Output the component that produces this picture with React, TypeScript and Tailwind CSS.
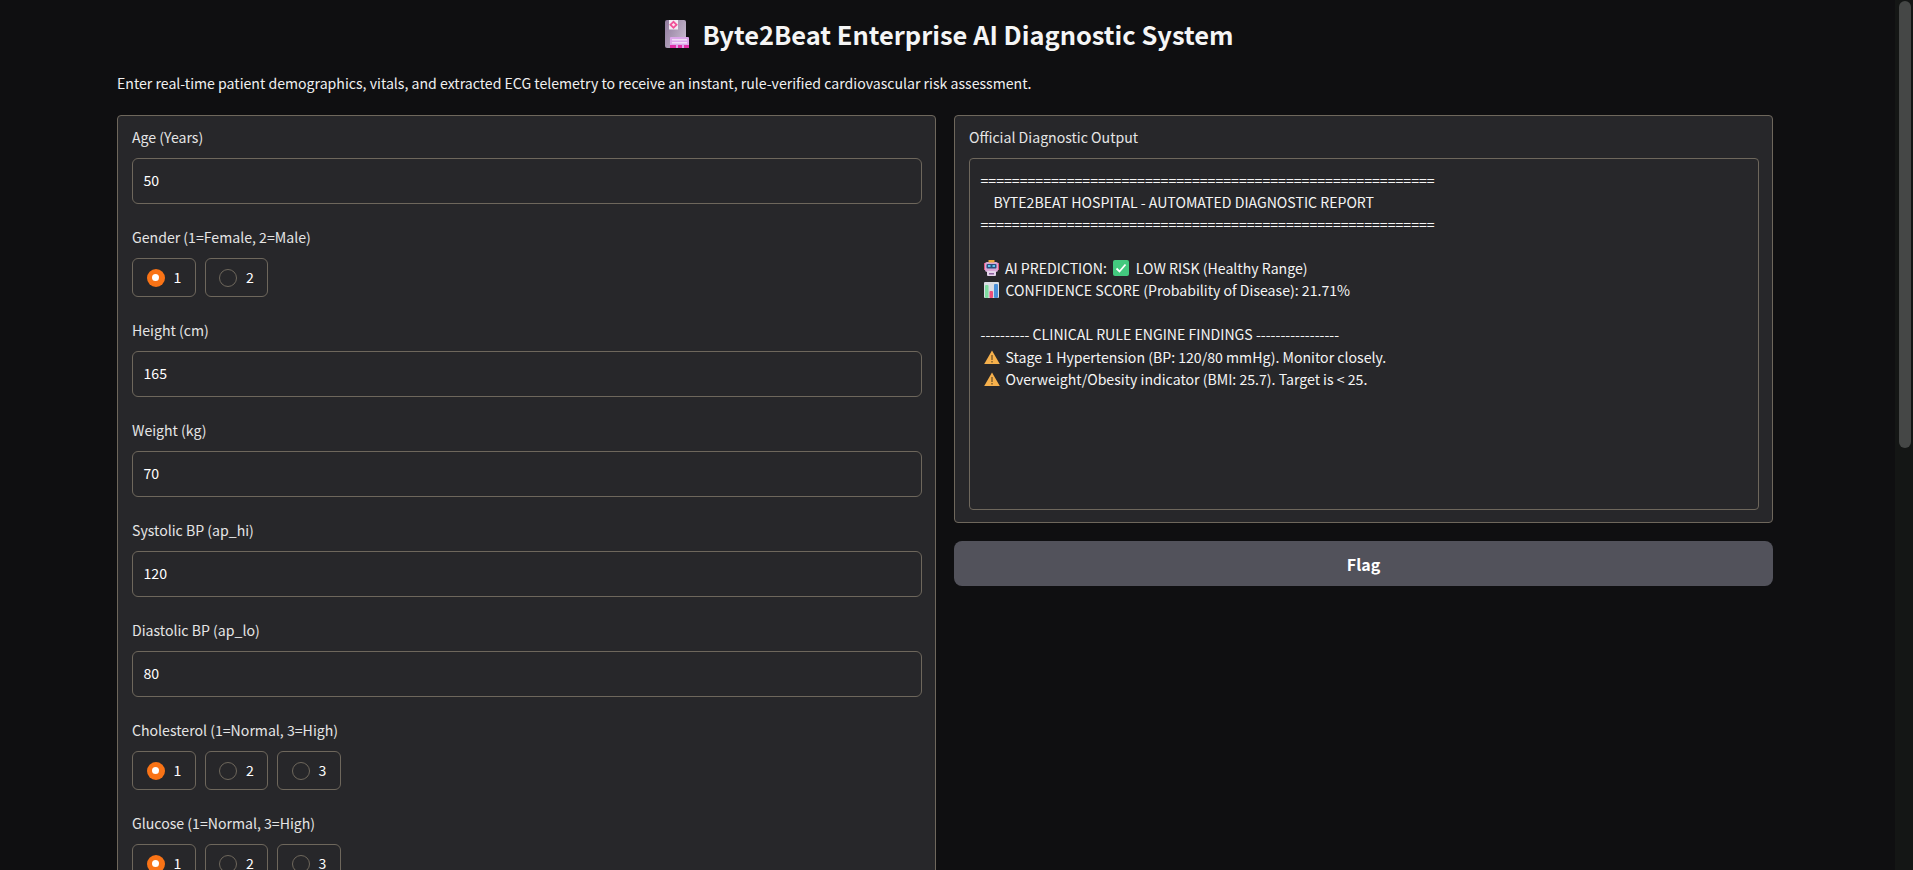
const font = { fontFamily: '"Noto Sans CJK SC", "Noto Sans", sans-serif' }

function Field({ label, value }: { label: string; value: string }) {
  return (
    <div className="flex flex-col">
      <label className="text-[14.12px] leading-[18px] text-[#e5e5e5]">{label}</label>
      <div className="mt-[12px] h-[46px] flex items-center pl-[10.5px] rounded-[6px] border border-[#6e675c] text-[14.12px] text-white">
        {value}
      </div>
    </div>
  )
}

function Radios({ label, options }: { label: string; options: string[] }) {
  return (
    <div className="flex flex-col">
      <label className="text-[14.12px] leading-[18px] text-[#e5e5e5]">{label}</label>
      <div className="mt-[12px] flex gap-[9px]">
        {options.map((opt, i) => (
          <div key={opt} className="h-[39px] w-[63.5px] flex items-center gap-[9px] pl-[13.5px] rounded-[6px] border border-[#6e675c] text-[14.12px] text-white">
            {i === 0 ? (
              <span className="w-[18px] h-[18px] rounded-full bg-[#f97316] flex items-center justify-center">
                <span className="w-[7px] h-[7px] rounded-full bg-white" />
              </span>
            ) : (
              <span className="w-[18px] h-[18px] rounded-full border border-[#6e675c]" />
            )}
            {opt}
          </div>
        ))}
      </div>
    </div>
  )
}

function HospitalIcon() {
  return (
    <svg width="25" height="28" viewBox="0 0 25 28" className="shrink-0">
      <defs>
        <linearGradient id="tower" x1="0" y1="0" x2="1" y2="0.6">
          <stop offset="0" stopColor="#8f7a9c" />
          <stop offset="1" stopColor="#c4b6cc" />
        </linearGradient>
      </defs>
      <rect x="0" y="0" width="21" height="28" rx="2" fill="url(#tower)" />
      <rect x="4" y="0" width="9" height="9.500" fill="#f1e8f2" />
      <path d="M8.500 0.500l4.300 4.300-4.300 4.300-4.300-4.300z" fill="#f04f98" />
      <path d="M8.500 3l1.800 1.800-1.800 1.800-1.800-1.800z" fill="#fbe3ef" />
      <rect x="5" y="17" width="19" height="11" rx="1" fill="#dca6ea" />
      <rect x="7" y="19" width="15" height="1.500" fill="#f2dcf7" />
      <rect x="7" y="22" width="15" height="1.500" fill="#f2dcf7" />
      <rect x="5" y="25" width="19" height="3" fill="#e02fa8" />
      <rect x="11" y="25" width="2" height="3" fill="#dca6ea" />
      <rect x="17" y="25" width="2" height="3" fill="#dca6ea" />
    </svg>
  )
}

function RobotIcon() {
  return (
    <svg width="15" height="16" viewBox="0 0 15 16" className="shrink-0">
      <rect x="0" y="3" width="2" height="7" fill="#e0567c" />
      <rect x="13" y="3" width="2" height="7" fill="#e0567c" />
      <rect x="1" y="2" width="13" height="10" rx="2" fill="#d9a8d6" />
      <rect x="4.500" y="0" width="6" height="2.500" fill="#e8a93c" />
      <rect x="2.500" y="4" width="10" height="4.500" rx="1" fill="#2d4f7c" />
      <rect x="4" y="5" width="2.500" height="2" fill="#5fc6ee" />
      <rect x="8.500" y="5" width="2.500" height="2" fill="#5fc6ee" />
      <rect x="3" y="11" width="9" height="5" rx="1" fill="#e4d4ea" />
      <rect x="5" y="13" width="5" height="1.500" fill="#8b5f9e" />
    </svg>
  )
}

function CheckIcon() {
  return (
    <svg width="16" height="16" viewBox="0 0 16 16" className="shrink-0">
      <rect width="16" height="16" rx="2" fill="#43c97e" />
      <path d="M3.500 8.500l3 3 6-7" fill="none" stroke="#fff" strokeWidth="1.800" />
    </svg>
  )
}

function ChartIcon() {
  return (
    <svg width="15" height="16" viewBox="0 0 15 16" className="shrink-0">
      <rect width="15" height="16" rx="1" fill="#d9dde4" />
      <rect x="1" y="3" width="3.500" height="13" rx="1" fill="#7fdca0" />
      <rect x="5.500" y="9" width="3.500" height="7" rx="1" fill="#ef4f7a" />
      <rect x="10" y="2" width="4" height="14" rx="1" fill="#4a90d9" />
    </svg>
  )
}

function WarnIcon() {
  return (
    <svg width="16" height="14" viewBox="0 0 16 14" className="shrink-0">
      <path d="M8 0.500L15.800 14H0.200z" fill="#f5b04c" />
      <rect x="7.300" y="5" width="1.400" height="5" fill="#7a5a2a" />
      <rect x="7.300" y="11" width="1.400" height="1.500" fill="#7a5a2a" />
    </svg>
  )
}

const sep = '='.repeat(58)

export default function App() {
  return (
    <div style={font} className="relative h-[870px] overflow-hidden bg-[#0f0f11] text-white">
      <div className="w-[1656px] ml-[117px]">
        <h1 className="h-[68px] pl-[8px] flex items-center justify-center gap-[13px] text-[25.45px] font-semibold text-[#f5f5f5]">
          <HospitalIcon />
          <span>Byte2Beat Enterprise AI Diagnostic System</span>
        </h1>
        <p className="h-[47px] pt-[5px] text-[14.12px] text-[#f0f0f0]">
          Enter real-time patient demographics, vitals, and extracted ECG telemetry to receive an instant, rule-verified cardiovascular risk assessment.
        </p>
        <div className="flex gap-[18px] items-start">
          <div className="w-[819px] shrink-0 flex flex-col gap-[24px] pl-[14px] pr-[13px] py-[12px] rounded-[4px] border border-[#6e675c] bg-[#27272a]">
            <Field label="Age (Years)" value="50" />
            <Radios label="Gender (1=Female, 2=Male)" options={['1', '2']} />
            <Field label="Height (cm)" value="165" />
            <Field label="Weight (kg)" value="70" />
            <Field label="Systolic BP (ap_hi)" value="120" />
            <Field label="Diastolic BP (ap_lo)" value="80" />
            <Radios label="Cholesterol (1=Normal, 3=High)" options={['1', '2', '3']} />
            <Radios label="Glucose (1=Normal, 3=High)" options={['1', '2', '3']} />
          </div>
          <div className="flex-1 flex flex-col gap-[18px]">
            <div className="h-[408px] flex flex-col pl-[14px] pr-[13px] py-[12px] rounded-[4px] border border-[#6e675c] bg-[#27272a]">
              <label className="text-[14.12px] leading-[18px] text-[#e5e5e5]">Official Diagnostic Output</label>
              <div className="mt-[12px] flex-1 pl-[10.5px] pt-[10px] rounded-[4px] border border-[#6e675c] text-[14.12px] leading-[22px] text-[#f5f5f5]">
                <div>{sep}</div>
                <div className="pl-[13px]">BYTE2BEAT HOSPITAL - AUTOMATED DIAGNOSTIC REPORT</div>
                <div>{sep}</div>
                <div className="h-[22px]" />
                <div className="flex items-center gap-[6.5px] pl-[3px]">
                  <RobotIcon />
                  <span>AI PREDICTION:</span>
                  <CheckIcon />
                  <span>LOW RISK (Healthy Range)</span>
                </div>
                <div className="flex items-center gap-[7px] pl-[3px]">
                  <ChartIcon />
                  <span>CONFIDENCE SCORE (Probability of Disease): 21.71%</span>
                </div>
                <div className="h-[22px]" />
                <div>---------- CLINICAL RULE ENGINE FINDINGS -----------------</div>
                <div className="mt-[1px] flex items-center gap-[6px] pl-[3px]">
                  <WarnIcon />
                  <span>Stage 1 Hypertension (BP: 120/80 mmHg). Monitor closely.</span>
                </div>
                <div className="flex items-center gap-[6px] pl-[3px]">
                  <WarnIcon />
                  <span>Overweight/Obesity indicator (BMI: 25.7). Target is &lt; 25.</span>
                </div>
              </div>
            </div>
            <button className="h-[45px] rounded-[8px] bg-[#52525b] text-[16px] font-semibold text-white">Flag</button>
          </div>
        </div>
      </div>
      {/* scrollbar */}
      <div className="absolute right-0 top-0 bottom-0 w-[18px] bg-[#141615]">
        <div className="mt-[1px] ml-[4px] w-[12px] h-[447px] rounded-full bg-[#454746]" />
      </div>
    </div>
  )
}
